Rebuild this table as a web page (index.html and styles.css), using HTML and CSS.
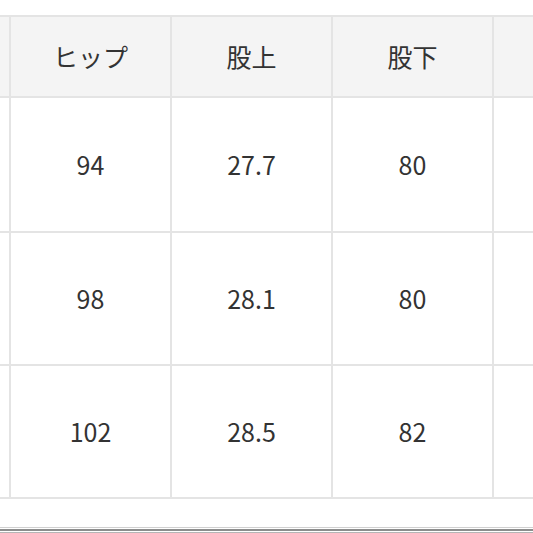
FILE: index.html
```html
<!DOCTYPE html>
<html lang="ja">
<head>
<meta charset="utf-8">
<link rel="stylesheet" href="styles.css">
</head>
<body>
<div class="page">
  <div class="sheet">
    <div class="grid">
      <div class="cell head"></div>
      <div class="cell head">ヒップ</div>
      <div class="cell head">股上</div>
      <div class="cell head">股下</div>
      <div class="cell head"></div>

      <div class="cell"></div>
      <div class="cell">94</div>
      <div class="cell">27.7</div>
      <div class="cell">80</div>
      <div class="cell"></div>

      <div class="cell"></div>
      <div class="cell">98</div>
      <div class="cell">28.1</div>
      <div class="cell">80</div>
      <div class="cell"></div>

      <div class="cell"></div>
      <div class="cell">102</div>
      <div class="cell">28.5</div>
      <div class="cell">82</div>
      <div class="cell"></div>
    </div>
  </div>
  <div class="bottom-bar"></div>
</div>
</body>
</html>
```
FILE: styles.css
```css
html, body {
  margin: 0;
  padding: 0;
  background: #ffffff;
}
body {
  width: 533px;
  height: 533px;
  overflow: hidden;
  font-family: "Noto Sans CJK JP", "Noto Sans", sans-serif;
  color: #333333;
}
.page {
  width: 533px;
  height: 533px;
  display: flex;
  flex-direction: column;
  overflow: hidden;
}
.sheet {
  padding-top: 15px;
  height: 513px;
  overflow: hidden;
}
.grid {
  margin-left: -152px;
  width: max-content;
  display: grid;
  grid-template-columns: repeat(5, 159px);
  grid-template-rows: 79px 133px 131px 131px;
  gap: 2px;
  padding: 2px;
  background: #e4e4e4;
}
.cell {
  background: #ffffff;
  display: flex;
  align-items: center;
  justify-content: center;
  font-size: 25px;
  line-height: 1;
}
.cell.head {
  background: #f4f4f4;
}
.bottom-bar {
  height: 5px;
  border-top: 1px solid #d0d0d0;
  background: linear-gradient(#ffffff 0 1px, #8d8d8d 1px 3px, #ffffff 3px 4px, #b5b5b5 4px);
}
```
